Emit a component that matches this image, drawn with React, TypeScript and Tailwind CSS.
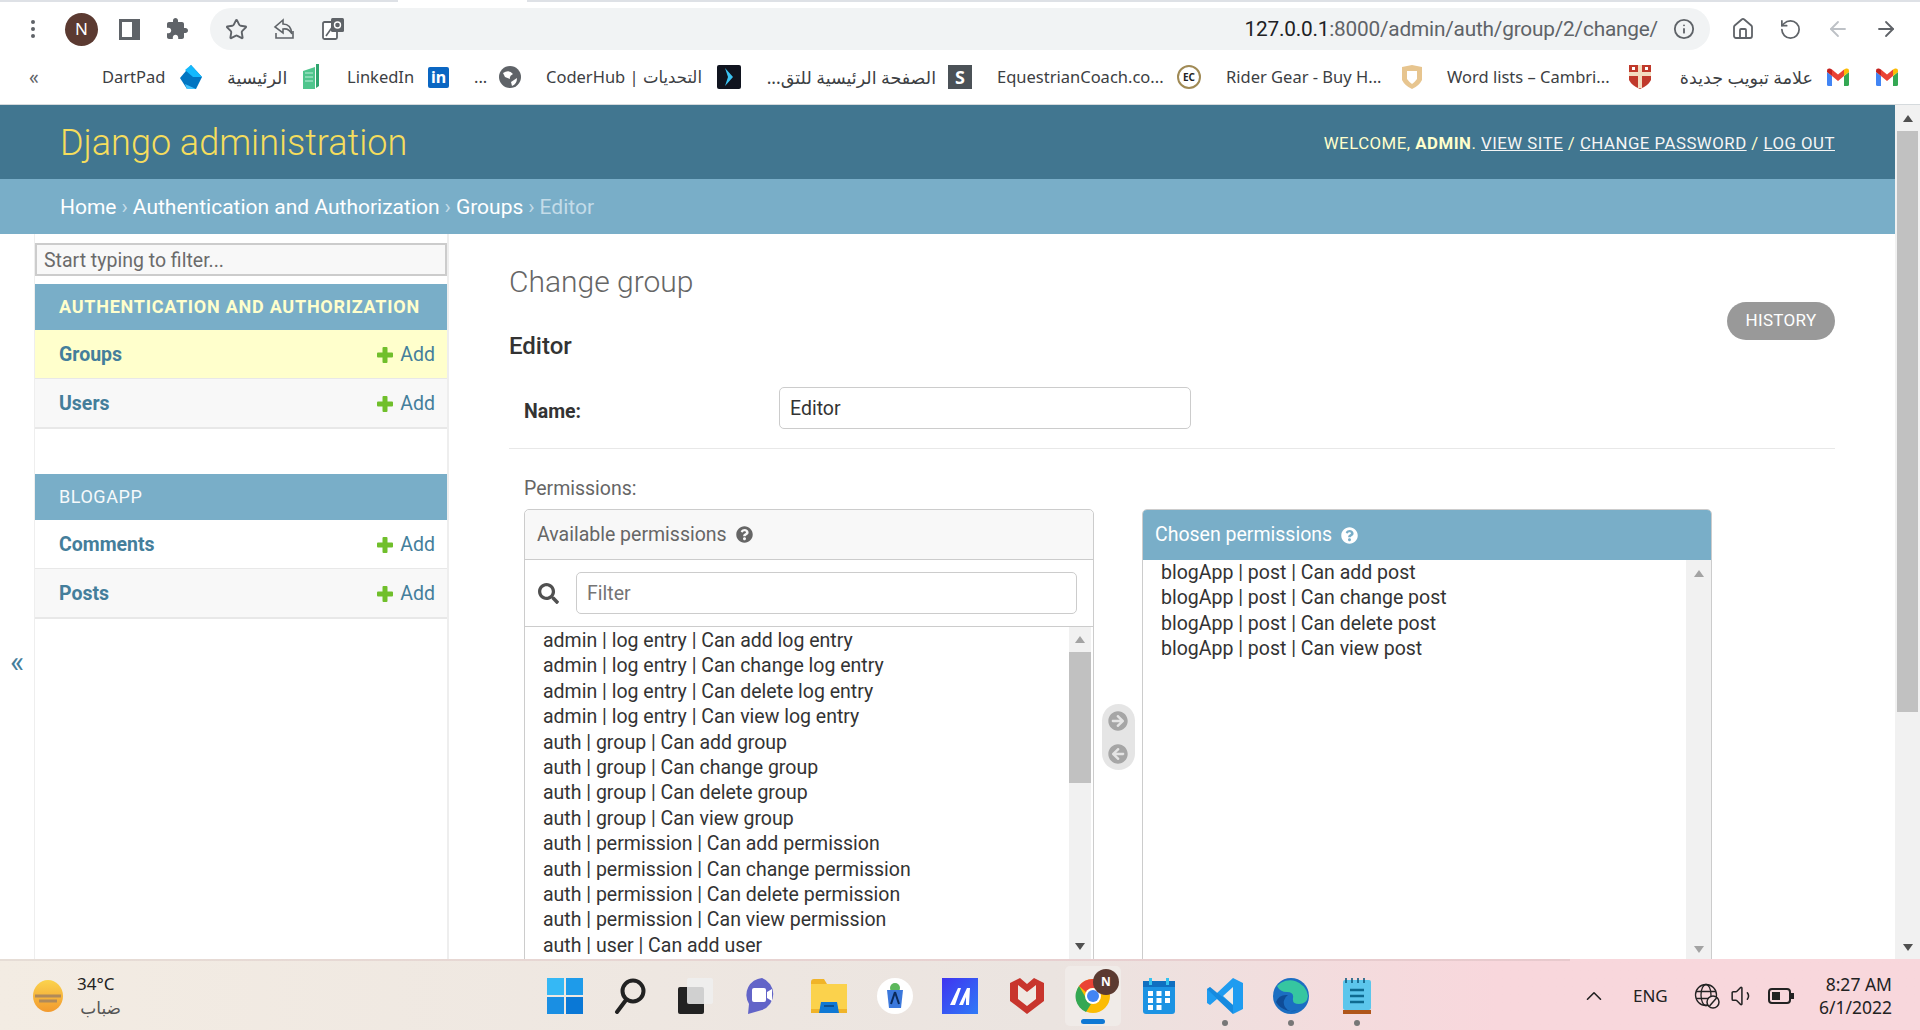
import React from "react";
import { Star, Home, RotateCcw, ArrowLeft, ArrowRight, Info, ChevronUp, Volume1 } from "lucide-react";
import { FaSearch, FaQuestionCircle, FaArrowCircleRight, FaArrowCircleLeft } from "react-icons/fa";

const Gmail = () => (
  <svg width="22" height="18" viewBox="0 0 22 18" className="shrink-0">
    <path d="M0 4 L0 16.5 Q0 18 1.5 18 L5 18 L5 8Z" fill="#4285f4" />
    <path d="M17 8 L17 18 L20.5 18 Q22 18 22 16.5 L22 4Z" fill="#34a853" />
    <path d="M5 8 L5 1.5 L11 6.5 L17 1.5 L17 8 L11 13Z" fill="#ea4335" />
    <path d="M0 4 L0 2.5 Q0 0 3 0.5 L5 1.5 L5 8Z" fill="#c5221f" />
    <path d="M22 4 L22 2.5 Q22 0 19 0.5 L17 1.5 L17 8Z" fill="#fbbc04" />
  </svg>
);

const Dart = () => (
  <svg width="24" height="26" viewBox="0 0 24 26">
    <path d="M12 1 L23 13 L17 25 L8 25 L1 14Z" fill="#0175c2" />
    <path d="M12 1 L23 13 L14 13 L6 6Z" fill="#13b9fd" />
    <path d="M6 20 L17 25 L8 25Z" fill="#40c4ff" />
  </svg>
);

const Bookmark = ({ label, ml, w, icon, cls = "text-[16.5px]", rtl }: { label: string; ml: string; w: string; icon: React.ReactNode; cls?: string; rtl?: boolean }) => (
  <div className={`flex items-center shrink-0 ${ml}`}>
    <span dir={rtl ? "rtl" : "ltr"} className={`text-[#3c4043] whitespace-nowrap shrink-0 ${cls} ${w}`}>{label}</span>
    {icon}
  </div>
);

const Sq = ({ className, children }: { className: string; children?: React.ReactNode }) => (
  <span className={`flex items-center justify-center shrink-0 ${className}`}>{children}</span>
);

const BrowserChrome = () => (
  <div className="h-[105px] shrink-0 bg-white border-b border-b-[#d5dadd] flex flex-col font-['Noto_Sans','DejaVu_Sans',sans-serif]">
    <div className="h-[2px] bg-[#dee1e6] flex shrink-0">
      <div className="ml-[398px] w-[129px] bg-white" />
    </div>
    <div className="h-[50px] flex items-center pt-[4px] shrink-0">
      <div className="w-[65px] flex justify-center">
        <span className="flex flex-col gap-[3px]">
          <i className="w-[4px] h-[4px] rounded-full bg-[#5f6368]" />
          <i className="w-[4px] h-[4px] rounded-full bg-[#5f6368]" />
          <i className="w-[4px] h-[4px] rounded-full bg-[#5f6368]" />
        </span>
      </div>
      <div className="w-[33px] h-[33px] rounded-full bg-[#5b3a31] text-white text-[17px] flex items-center justify-center">N</div>
      <div className="ml-[21px] w-[21px] h-[21px] border-y-[3px] border-l-[3px] border-r-[8px] border-[#5f6368] bg-white" />
      <div className="ml-[25px] w-[24px] text-[#5f6368]">
        <svg width="24" height="24" viewBox="0 0 24 24" fill="#5f6368"><path d="M20.5 11H19V7c0-1.1-.9-2-2-2h-4V3.5C13 2.12 11.88 1 10.5 1S8 2.12 8 3.5V5H4c-1.1 0-1.99.9-1.99 2v3.8H3.5c1.49 0 2.7 1.21 2.7 2.7s-1.21 2.7-2.7 2.7H2V20c0 1.1.9 2 2 2h3.8v-1.5c0-1.49 1.21-2.7 2.7-2.7 1.49 0 2.7 1.21 2.7 2.7V22H17c1.1 0 2-.9 2-2v-4h1.5c1.38 0 2.5-1.12 2.5-2.5S21.88 11 20.5 11z" /></svg>
      </div>
      <div className="ml-[21px] w-[1500px] h-[42px] rounded-full bg-[#f1f3f4] flex items-center">
        <Star size={23} className="ml-[15px] text-[#5f6368]" strokeWidth={2} />
        <svg width="24" height="24" viewBox="0 0 24 24" fill="none" stroke="#5f6368" strokeWidth="1.6" className="ml-[24px]">
          <path d="M11 3 L3 10 L11 16 L11 12 Q17 11 20 17 Q19 7 11 7Z" />
          <path d="M4 16 L4 21 L21 21 L21 14" />
        </svg>
        <svg width="24" height="24" viewBox="0 0 24 24" className="ml-[25px]">
          <rect x="2" y="5" width="14" height="17" rx="1.5" fill="#fff" stroke="#5f6368" strokeWidth="1.8" />
          <rect x="10" y="1" width="13" height="14" rx="1.5" fill="#5f6368" />
          <circle cx="16.5" cy="8" r="3" fill="none" stroke="#fff" strokeWidth="1.4" />
          <path d="M5 19 L12 9" stroke="#5f6368" strokeWidth="1.6" />
        </svg>
        <div className="ml-auto flex items-center">
          <span className="pt-[2px] text-[20.8px] tracking-[-0.2px] text-[#5f6368] font-['Roboto',sans-serif] whitespace-nowrap"><span className="text-[#202124]">127.0.0.1</span>:8000/admin/auth/group/2/change/</span>
          <Info size={22} className="ml-[15px] mr-[15px] text-[#5f6368]" strokeWidth={2} />
        </div>
      </div>
      <Home size={24} className="ml-[21px] text-[#5f6368]" strokeWidth={1.8} />
      <RotateCcw size={23} className="ml-[24px] text-[#5f6368]" strokeWidth={1.8} />
      <ArrowLeft size={24} className="ml-[24px] text-[#bdc1c6]" strokeWidth={1.8} />
      <ArrowRight size={24} className="ml-[24px] text-[#5f6368]" strokeWidth={1.8} />
    </div>
    <div className="flex-1 flex items-center pb-[2px]">
      <span className="ml-[29px] w-[12px] text-[#5f6368] text-[19px] leading-none">«</span>
      <Bookmark ml="ml-[61px]" w="w-[63px]" label="DartPad" icon={<span className="ml-[14px]"><Dart /></span>} />
      <Bookmark ml="ml-[24px]" w="w-[57px]" cls="text-[17.5px]" label="الرئيسية" icon={
        <svg width="18" height="26" viewBox="0 0 18 26" className="ml-[18px]"><path d="M1 7 L13 3 L13 25 L1 25Z" fill="#4fc58d" /><path d="M14 0 L17 0 L17 22 L14 24Z" fill="#2fa56f" /><path d="M3 9H11M3 13H11M3 17H11" stroke="#bfeedb" /></svg>
      } />
      <Bookmark ml="ml-[27px]" w="w-[67px]" label="LinkedIn" icon={
        <Sq className="ml-[14px] w-[21px] h-[21px] bg-[#0a66c2] text-white text-[16px] font-bold rounded-[2px]">in</Sq>
      } />
      <Bookmark ml="ml-[25px]" w="w-[11px]" label="..." icon={
        <svg width="22" height="22" viewBox="0 0 22 22" className="ml-[14px]"><circle cx="11" cy="11" r="11" fill="#5f6368" /><path d="M4 7 Q10 3 14 8 Q10 10 11 13 L6 11Z M12 16 Q15 14 18 12 Q18 18 13 20Z" fill="#fff" /></svg>
      } />
      <Bookmark ml="ml-[25px]" w="w-[158px]" label="CoderHub | التحديات" icon={
        <Sq className="ml-[13px] w-[24px] h-[24px] bg-[#10141f] rounded-[2px]"><svg width="14" height="20" viewBox="0 0 14 20"><path d="M3 1 L11 10 L3 19 L6 10Z" fill="#3cc3f2" /></svg></Sq>
      } />
      <Bookmark rtl ml="ml-[24px]" w="w-[171px]" cls="text-[17.5px]" label="الصفحة الرئيسية للتق..." icon={
        <Sq className="ml-[12px] w-[24px] h-[24px] bg-[#4b5257] text-white text-[18px] font-bold">S</Sq>
      } />
      <Bookmark ml="ml-[25px]" w="w-[168px]" label="EquestrianCoach.co..." icon={
        <Sq className="ml-[12px] w-[24px] h-[24px] rounded-full bg-white border-[2px] border-[#a08a55] text-[#222] text-[10px] font-bold">EC</Sq>
      } />
      <Bookmark ml="ml-[25px]" w="w-[160px]" label="Rider Gear - Buy H..." icon={
        <svg width="22" height="26" viewBox="0 0 22 26" className="ml-[15px]"><path d="M1 3 L11 1 L21 3 L21 16 Q18 22 11 25 Q4 22 1 16Z" fill="#e7c58f" /><path d="M6 7 H16 V15 Q13 19 11 20 Q9 19 6 15Z" fill="#fff" /></svg>
      } />
      <Bookmark ml="ml-[24px]" w="w-[168px]" label="Word lists – Cambri..." icon={
        <svg width="22" height="26" viewBox="0 0 22 26" className="ml-[14px]"><path d="M0 1 H22 V16 Q19 22 11 25 Q3 22 0 16Z" fill="#c0392b" /><path d="M9 1 H13 V24 H9Z M0 8 H22 V12 H0Z" fill="#f3ddc0" /><rect x="3" y="3" width="3" height="3" fill="#fff" /><rect x="16" y="3" width="3" height="3" fill="#fff" /></svg>
      } />
      <Bookmark rtl ml="ml-[25px]" w="w-[137px]" cls="text-[17.5px]" label="علامة تبويب جديدة" icon={<span className="ml-[14px]"><Gmail /></span>} />
      <span className="ml-[27px]"><Gmail /></span>
    </div>
  </div>
);

const Arrow = ({ up, color = "#505050" }: { up?: boolean; color?: string }) => (
  <svg width="12" height="9" viewBox="0 0 12 9"><path d={up ? "M6 1 L11 8 L1 8Z" : "M1 1 L11 1 L6 8Z"} fill={color} /></svg>
);

const Plus = () => (
  <svg width="16" height="16" viewBox="0 0 16 16" className="ml-auto shrink-0"><path d="M5.5 1 Q5.5 0 6.5 0 H9.5 Q10.5 0 10.5 1 V5.5 H15 Q16 5.5 16 6.5 V9.5 Q16 10.5 15 10.5 H10.5 V15 Q10.5 16 9.5 16 H6.5 Q5.5 16 5.5 15 V10.5 H1 Q0 10.5 0 9.5 V6.5 Q0 5.5 1 5.5 H5.5Z" fill="#70bf2b" /></svg>
);

const ModuleRow = ({ name, bg, border = "h-[49px] border-b border-b-[#e8e8e8]" }: { name: string; bg: string; border?: string }) => (
  <div className={`flex items-center pt-[2px] pl-[24px] pr-[12px] ${bg} ${border}`}>
    <span className="text-[19.5px] font-bold text-[#447e9b]">{name}</span>
    <Plus />
    <span className="ml-[7px] text-[19.5px] text-[#447e9b]">Add</span>
  </div>
);

const Sidebar = () => (
  <div className="w-[415px] shrink-0 border-r-2 border-r-[#eeeeee] border-l border-l-[#eeeeee] pt-[9px]">
    <div className="h-[33px] pt-[2px] border-2 border-[#cccccc] bg-[#f8f8f8] text-[19.5px] text-[#6b6b6b] flex items-center pl-[7px]">Start typing to filter...</div>
    <div className="mt-[8px] h-[46px] pb-[2px] bg-[#79aec8] text-[#ffffcc] font-bold text-[18px] tracking-[0.75px] flex items-center pl-[24px]">AUTHENTICATION AND AUTHORIZATION</div>
    <ModuleRow name="Groups" bg="bg-[#ffffcc]" />
    <ModuleRow name="Users" bg="bg-[#f8f8f8]" border="h-[50px] border-b-2 border-b-[#e8e8e8]" />
    <div className="mt-[45px] h-[46px] pb-[2px] bg-[#79aec8] text-[#f5f9fb] text-[18px] tracking-[0.55px] flex items-center pl-[24px]">BLOGAPP</div>
    <ModuleRow name="Comments" bg="bg-white" />
    <ModuleRow name="Posts" bg="bg-[#f8f8f8]" border="h-[50px] border-b-2 border-b-[#e8e8e8]" />
  </div>
);

const available = [
  "admin | log entry | Can add log entry",
  "admin | log entry | Can change log entry",
  "admin | log entry | Can delete log entry",
  "admin | log entry | Can view log entry",
  "auth | group | Can add group",
  "auth | group | Can change group",
  "auth | group | Can delete group",
  "auth | group | Can view group",
  "auth | permission | Can add permission",
  "auth | permission | Can change permission",
  "auth | permission | Can delete permission",
  "auth | permission | Can view permission",
  "auth | user | Can add user",
];
const chosen = ["blogApp | post | Can add post", "blogApp | post | Can change post", "blogApp | post | Can delete post", "blogApp | post | Can view post"];

const ListItems = ({ items, cls = "" }: { items: string[]; cls?: string }) => (
  <div className={`flex-1 pl-[18px] text-[19.5px] leading-[25.4px] text-[#333333] whitespace-nowrap overflow-hidden ${cls}`}>
    {items.map((t) => <div key={t}>{t}</div>)}
  </div>
);

const MainContent = () => (
  <div className="flex-1 min-w-0 pl-[60px] pr-[60px] overflow-hidden relative">
    <h1 className="mt-[30px] h-[36px] text-[30px] leading-[36px] font-light text-[#666666]">Change group</h1>
    <h2 className="mt-[32px] h-[28px] text-[24px] leading-[28px] font-medium text-[#333333]">Editor</h2>
    <a className="absolute right-[60px] top-[68px] w-[108px] h-[38px] rounded-full bg-[#999999] text-white text-[17px] tracking-[0.3px] flex items-center justify-center">HISTORY</a>
    <div className="mt-[27px] h-[62px] border-b border-b-[#e8e8e8] flex items-start pl-[15px]">
      <label className="w-[255px] mt-[10px] text-[19.5px] font-bold text-[#333333]">Name:</label>
      <div className="w-[412px] h-[42px] pt-[2px] rounded-[5px] border border-[#cccccc] flex items-center pl-[10px] text-[19.5px] text-[#333333]">Editor</div>
    </div>
    <div className="pl-[15px] mt-[28px]">
      <div className="h-[24px] text-[19.5px] leading-[24px] text-[#666666]">Permissions:</div>
      <div className="flex mt-[8px] items-start">
        <div className="w-[570px] h-[500px] border border-[#cccccc] rounded-t-[5px] flex flex-col shrink-0">
          <div className="h-[50px] shrink-0 bg-[#f8f8f8] border-b border-b-[#cccccc] rounded-t-[5px] flex items-center pl-[12px] text-[19.5px] text-[#666666]">
            Available permissions
            <FaQuestionCircle size={17} className="ml-[9px] text-[#666666]" />
          </div>
          <div className="h-[67px] shrink-0 border-b border-b-[#cccccc] flex items-center pl-[13px]">
            <FaSearch size={21} className="text-[#505050]" />
            <div className="ml-[17px] w-[501px] h-[42px] pt-[2px] border border-[#cccccc] rounded-[5px] flex items-center pl-[10px] text-[19.5px] text-[#757575]">Filter</div>
          </div>
          <div className="h-[332px] flex">
            <ListItems items={available} cls="pt-[1px]" />
            <div className="w-[22px] mr-[2px] shrink-0 bg-[#f1f1f1] flex flex-col items-center">
              <div className="h-[25px] flex items-center"><Arrow up color="#a3a3a3" /></div>
              <div className="w-full h-[131px] bg-[#c1c1c1]" />
              <div className="mt-auto h-[26px] flex items-center"><Arrow /></div>
            </div>
          </div>
        </div>
        <div className="w-[48px] shrink-0 flex justify-center pt-[195px]">
          <div className="w-[33px] h-[66px] rounded-full bg-[#e5e5e5] flex flex-col items-center justify-center gap-[13px]">
            <FaArrowCircleRight size={20} className="text-[#a6a6a6]" />
            <FaArrowCircleLeft size={20} className="text-[#a6a6a6]" />
          </div>
        </div>
        <div className="w-[570px] h-[500px] border border-[#cccccc] rounded-t-[5px] flex flex-col shrink-0">
          <div className="h-[50px] shrink-0 bg-[#79aec8] rounded-t-[4px] flex items-center pl-[12px] text-[19.5px] text-white">
            Chosen permissions
            <FaQuestionCircle size={17} className="ml-[9px] text-white" />
          </div>
          <div className="h-[399px] flex">
            <ListItems items={chosen} />
            <div className="w-[25px] shrink-0 bg-[#f1f1f1] flex flex-col items-center">
              <div className="h-[26px] flex items-center"><Arrow up color="#a3a3a3" /></div>
              <div className="mt-auto h-[20px] flex items-center"><Arrow color="#a3a3a3" /></div>
            </div>
          </div>
        </div>
      </div>
    </div>
  </div>
);

const Page = () => (
  <div className="flex-1 min-h-0 flex font-['Roboto',sans-serif]">
    <div className="flex-1 min-w-0 flex flex-col">
      <div className="h-[74px] shrink-0 bg-[#417690] flex items-center justify-between pl-[60px] pr-[60px]">
        <span className="mt-[2px] text-[36px] font-light text-[#f5dd5d]">Django administration</span>
        <span className="mt-[3px] text-[16.8px] tracking-[0.5px] text-[#ffffcc]">
          WELCOME, <b>ADMIN</b>. <u className="text-[#f5f5f5]">VIEW SITE</u> / <u className="text-[#f5f5f5]">CHANGE PASSWORD</u> / <u className="text-[#f5f5f5]">LOG OUT</u>
        </span>
      </div>
      <div className="h-[55px] pt-[2px] shrink-0 bg-[#79aec8] flex items-center pl-[60px] text-[21px] text-white">
        Home<span className="mx-[5px] text-[#c4dce8]">›</span>Authentication and Authorization<span className="mx-[5px] text-[#c4dce8]">›</span>Groups<span className="mx-[5px] text-[#c4dce8]">›</span><span className="text-[#c4dce8]">Editor</span>
      </div>
      <div className="flex-1 min-h-0 flex overflow-hidden">
        <div className="w-[34px] shrink-0 flex items-center justify-center pt-[130px] text-[#447e9b] text-[30px]">«</div>
        <Sidebar />
        <MainContent />
      </div>
    </div>
    <div className="w-[25px] shrink-0 bg-[#f1f1f1] flex flex-col items-center">
      <div className="h-[26px] flex items-center"><Arrow up /></div>
      <div className="w-[21px] h-[581px] bg-[#c1c1c1]" />
      <div className="mt-auto h-[24px] flex items-center"><Arrow /></div>
    </div>
  </div>
);

const I = ({ ml, children }: { ml: string; children: React.ReactNode }) => <span className={`relative shrink-0 flex items-center justify-center ${ml}`}>{children}</span>;

const Taskbar = () => (
  <div className="h-[71px] shrink-0 bg-gradient-to-r from-[#f3ece3] via-[#ebe4e0] via-55% to-[#f8d7dc] to-78% flex flex-col font-['Noto_Sans','DejaVu_Sans',sans-serif] text-[#222222]">
    <div className="h-[2px] w-[1570px] shrink-0 bg-gradient-to-r from-[#e6ddd6] to-[#e8c9cd]" />
    <div className="flex-1 flex items-center">
      <svg width="32" height="34" viewBox="0 0 32 34" className="ml-[32px] shrink-0">
        <defs><linearGradient id="sun" x1="0" y1="0" x2="0" y2="1"><stop offset="0" stopColor="#fbd34d" /><stop offset="1" stopColor="#f29a2e" /></linearGradient></defs>
        <ellipse cx="16" cy="17" rx="15" ry="16" fill="url(#sun)" />
        <path d="M3 17 H29 M7 22 H25" stroke="#b08a5a" strokeWidth="3" />
      </svg>
      <div className="ml-[13px] w-[60px] flex flex-col text-[17px] leading-[24px] shrink-0">
        <span>34°C</span>
        <span className="text-[#555555] text-right w-[44px]" dir="rtl">ضباب</span>
      </div>
      <I ml="ml-[410px]">
        <svg width="36" height="36" viewBox="0 0 36 36">
          <rect x="0" y="0" width="17" height="17" fill="#35b8f5" /><rect x="19" y="0" width="17" height="17" fill="#1e9bea" />
          <rect x="0" y="19" width="17" height="17" fill="#1a8fe3" /><rect x="19" y="19" width="17" height="17" fill="#0a78d6" />
        </svg>
      </I>
      <I ml="ml-[31px]">
        <svg width="32" height="36" viewBox="0 0 32 36" fill="none" stroke="#222" strokeWidth="4"><circle cx="19" cy="13" r="10.5" /><path d="M12 22 L3 34" strokeLinecap="round" /></svg>
      </I>
      <I ml="ml-[32px]">
        <svg width="36" height="36" viewBox="0 0 36 36"><rect x="0" y="9" width="26" height="27" rx="2" fill="#222" /><rect x="9" y="0" width="26" height="26" rx="2" fill="#eeeeee" fillOpacity="0.85" /></svg>
      </I>
      <I ml="ml-[30px]">
        <svg width="36" height="38" viewBox="0 0 36 38"><path d="M18 1 A17 17 0 0 1 18 33 L4 37 L5 27 A17 17 0 0 1 18 1Z" fill="#6264c8" /><rect x="8" y="11" width="14" height="14" rx="2" fill="#fff" /><path d="M23 15 L28 12 V24 L23 21Z" fill="#fff" /></svg>
      </I>
      <I ml="ml-[31px]">
        <svg width="36" height="34" viewBox="0 0 36 34"><path d="M0 3 Q0 0 3 0 H13 L16 5 H36 V34 H0Z" fill="#f0b429" /><path d="M0 5 H36 V30 H0Z" fill="#fbd24c" /><path d="M10 23 H26 L28 34 H8Z" fill="#0f78d4" /><rect x="13" y="26" width="10" height="2" fill="#0a4f91" /></svg>
      </I>
      <I ml="ml-[30px]">
        <svg width="36" height="36" viewBox="0 0 36 36"><circle cx="18" cy="18" r="18" fill="#fff" /><circle cx="18" cy="10" r="5" fill="#5cb85c" /><path d="M10 12 H26 L24 30 H12Z" fill="#3b78dc" /><path d="M18 14 L14 26 M18 14 L22 26" stroke="#0b2a5b" strokeWidth="2" /></svg>
      </I>
      <I ml="ml-[29px]">
        <svg width="36" height="36" viewBox="0 0 36 36"><defs><linearGradient id="mg" x1="0" y1="0" x2="1" y2="1"><stop offset="0" stopColor="#3f34f0" /><stop offset="1" stopColor="#2f7af7" /></linearGradient></defs><rect width="36" height="36" fill="url(#mg)" /><path d="M8 27 L16 10 H19 L13 27Z M17 27 L25 10 H28 L27 27 H24 L24 19 L21 27Z" fill="#fff" /></svg>
      </I>
      <I ml="ml-[32px]">
        <svg width="34" height="36" viewBox="0 0 34 36"><path d="M0 5 L10 0 L17 6 L24 0 L34 5 V23 L17 36 L0 23Z" fill="#c8352d" /><path d="M8 7 L17 14 L26 7 V21 L17 28 L8 21Z" fill="#f0e9e3" /></svg>
      </I>
      <I ml="ml-[21px]">
        <span className="w-[56px] h-[60px] rounded-[5px] bg-[#f0ebe8] flex items-center justify-center">
          <svg width="36" height="36" viewBox="0 0 36 36">
            <circle cx="18" cy="18" r="17" fill="#fbbc04" />
            <path d="M18 1 A17 17 0 0 1 33 10 H18 A8 8 0 0 0 11 14 L4 8 A17 17 0 0 1 18 1Z" fill="#ea4335" />
            <path d="M4 8 L11 20 A8 8 0 0 0 16 26 L11 34 A17 17 0 0 1 4 8Z" fill="#34a853" />
            <circle cx="18" cy="18" r="8" fill="#fff" /><circle cx="18" cy="18" r="6" fill="#4285f4" />
          </svg>
        </span>
        <span className="absolute right-[2px] top-[3px] w-[26px] h-[26px] rounded-full bg-[#5b3a31] text-white text-[12px] font-bold flex items-center justify-center">N</span>
        <span className="absolute bottom-[2px] w-[24px] h-[5px] rounded-full bg-[#0f78d4]" />
      </I>
      <I ml="ml-[22px]">
        <svg width="32" height="36" viewBox="0 0 32 36"><rect y="3" width="32" height="33" rx="3" fill="#1c93e3" /><rect y="3" width="32" height="6" fill="#0f6fc0" /><rect x="6" y="0" width="3" height="7" fill="#35c3f0" /><rect x="23" y="0" width="3" height="7" fill="#35c3f0" /><path d="M5 13h5v5H5z M13.5 13h5v5h-5z M22 13h5v5h-5z M5 20h5v5H5z M13.5 20h5v5h-5z M22 20h5v5h-5z M5 27h5v5H5z M13.5 27h5v5h-5z" fill="#fff" /></svg>
      </I>
      <I ml="ml-[32px]">
        <svg width="36" height="36" viewBox="0 0 36 36"><path d="M26 0 L36 5 V31 L26 36 L10 21 L3 27 L0 25 V11 L3 9 L10 15Z" fill="#1f9cf0" /><path d="M26 9 L16 18 L26 27Z" fill="#f0ebe8" /><path d="M0 11 L3 9 L26 27 V36 Z" fill="#0b76c9" opacity="0.45" /></svg>
        <span className="absolute bottom-[-12px] w-[6px] h-[6px] rounded-full bg-[#777777]" />
      </I>
      <I ml="ml-[30px]">
        <svg width="36" height="36" viewBox="0 0 36 36"><circle cx="18" cy="18" r="18" fill="#1b6ec2" /><path d="M4 8 A18 18 0 0 1 35 18 Q34 26 26 26 Q19 26 20 20 Q21 14 14 14 Q7 14 4 8Z" fill="#36c6a0" /><path d="M15 17 A8 8 0 0 0 24 32 A18 18 0 0 1 3 24 Q6 16 15 17Z" fill="#0f4c97" /></svg>
        <span className="absolute bottom-[-12px] w-[6px] h-[6px] rounded-full bg-[#777777]" />
      </I>
      <I ml="ml-[34px]">
        <svg width="28" height="36" viewBox="0 0 28 36"><rect y="2" width="28" height="30" rx="2" fill="#5cc6ec" /><rect y="32" width="28" height="4" fill="#b0561a" /><path d="M3 0v5 M9 0v5 M15 0v5 M21 0v5" stroke="#0e5a7f" strokeWidth="1.6" /><path d="M7 12h14 M7 18h14 M7 24h14" stroke="#0e6a90" strokeWidth="2.4" /></svg>
        <span className="absolute bottom-[-12px] w-[6px] h-[6px] rounded-full bg-[#777777]" />
      </I>
      <ChevronUp size={26} className="ml-[210px] shrink-0 text-[#222222]" strokeWidth={1.5} />
      <span className="ml-[26px] text-[17px] leading-none">ENG</span>
      <svg width="26" height="26" viewBox="0 0 26 26" fill="none" stroke="#222" strokeWidth="1.3" className="ml-[26px] shrink-0">
        <circle cx="12" cy="12" r="10.5" /><ellipse cx="12" cy="12" rx="5" ry="10.5" /><path d="M2 8.5 H22 M2 15.5 H22" />
        <circle cx="19" cy="19" r="6" fill="#f7dde0" strokeWidth="1.5" /><path d="M15.5 23 L22.5 15" strokeWidth="1.5" />
      </svg>
      <Volume1 size={26} className="ml-[10px] shrink-0 text-[#222222]" strokeWidth={1.4} />
      <svg width="26" height="16" viewBox="0 0 26 16" className="ml-[12px] shrink-0"><rect x="1" y="1" width="21" height="14" rx="3" fill="none" stroke="#222" strokeWidth="2" /><rect x="4" y="4" width="8" height="8" fill="#222" /><rect x="23" y="5" width="3" height="6" fill="#222" /></svg>
      <div className="ml-auto mr-[28px] flex flex-col items-end text-[17.5px] leading-[23px]">
        <span>8:27 AM</span>
        <span>6/1/2022</span>
      </div>
    </div>
  </div>
);

export default function App() {
  return (
    <div className="w-[1920px] h-[1030px] overflow-hidden flex flex-col bg-white">
      <BrowserChrome />
      <Page />
      <Taskbar />
    </div>
  );
}
